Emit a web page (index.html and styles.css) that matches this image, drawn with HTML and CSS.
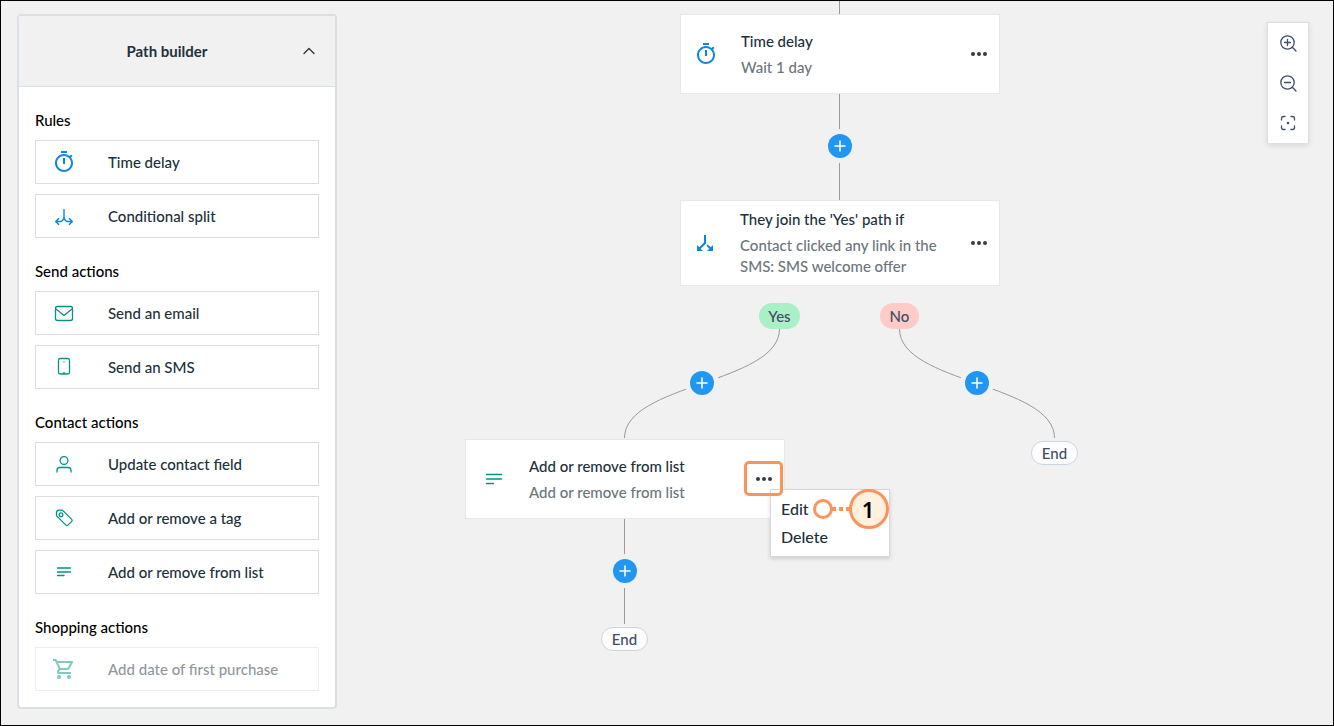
FILE: index.html
```html
<!DOCTYPE html>
<html lang="en">
<head>
<meta charset="utf-8">
<meta name="viewport" content="width=device-width, initial-scale=1">
<title>Path builder</title>
<link rel="stylesheet" href="styles.css">
</head>
<body>
<svg class="sprite" aria-hidden="true">
  <symbol id="timer" viewBox="0 0 24 24"><path fill="currentColor" d="M15 1H9v2h6V1zm-4 13h2V8h-2v6zm8.03-6.61 1.42-1.42c-.43-.51-.9-.99-1.41-1.41l-1.42 1.42C16.07 4.74 14.12 4 12 4c-4.97 0-9 4.03-9 9s4.02 9 9 9 9-4.03 9-9c0-2.12-.74-4.07-1.97-5.61zM12 20c-3.87 0-7-3.13-7-7s3.13-7 7-7 7 3.13 7 7-3.13 7-7 7z"/></symbol>
  <symbol id="lines" viewBox="0 0 24 24"><path stroke="currentColor" stroke-width="1.3" stroke-linecap="round" d="M5.500 8h13M5.500 12h13M5.500 15.500h6.500"/></symbol>
  <symbol id="dots" viewBox="0 0 18 6"><g fill="#3a3a3d"><circle cx="3" cy="3" r="2"/><circle cx="9" cy="3" r="2"/><circle cx="15" cy="3" r="2"/></g></symbol>
  <symbol id="plus" viewBox="0 0 24 24"><path stroke="#fff" stroke-width="1.500" stroke-linecap="round" d="M12 7v10M7 12h10"/></symbol>
</svg>
<div class="frame">
  <aside class="builder">
    <button class="builder-head" type="button" aria-expanded="true">
      <span>Path builder</span>
      <svg class="chevron" viewBox="0 0 20 20" fill="none" stroke="#2b3440" stroke-width="1.300" stroke-linecap="round" stroke-linejoin="round"><path d="M5 12.500 10 7.500l5 5"/></svg>
    </button>
    <div class="builder-body">
      <section class="group">
        <h2>Rules</h2>
        <button class="step" type="button"><svg class="icon blue"><use href="#timer"/></svg>Time delay</button>
        <button class="step" type="button"><svg class="icon blue" viewBox="0 0 24 24" fill="none" stroke="currentColor" stroke-width="1.400" stroke-linecap="round" stroke-linejoin="round"><path d="M12 5.500V12c0 2.500-1 4.700-3 5.500H4M12 12c0 2.500 1 4.700 3 5.500h5M6.700 14.500l-3 3 3 3M17.300 14.500l3 3-3 3"/></svg>Conditional split</button>
      </section>
      <section class="group">
        <h2>Send actions</h2>
        <button class="step" type="button"><svg class="icon teal" viewBox="0 0 24 24" fill="none" stroke="currentColor" stroke-width="1.300" stroke-linejoin="round"><rect x="3.500" y="5.500" width="17" height="14" rx="2"/><path d="m4 8 8 6.500L20 8"/></svg>Send an email</button>
        <button class="step" type="button"><svg class="icon teal" viewBox="0 0 24 24" fill="none" stroke="currentColor" stroke-width="1.300"><rect x="6.500" y="3.500" width="11" height="15.500" rx="1.800"/><path d="M10.800 18h2.400"/><circle cx="12" cy="7" r=".3" stroke-width=".8"/></svg>Send an SMS</button>
      </section>
      <section class="group">
        <h2>Contact actions</h2>
        <button class="step" type="button"><svg class="icon teal" viewBox="0 0 24 24" fill="none" stroke="currentColor" stroke-width="1.300" stroke-linecap="round"><circle cx="12" cy="8.500" r="3.900"/><path d="M5 20v-1.500q0-3 3-3h8q3 0 3 3V20"/></svg>Update contact field</button>
        <button class="step" type="button"><svg class="icon teal" viewBox="0 0 24 24" fill="none" stroke="currentColor" stroke-width="1.300" stroke-linejoin="round"><path d="M4.500 9.500V7q0-2.500 2.500-2.800h2.700q.8 0 1.500.7l8.500 8.500q1 1 0 2l-3.700 3.700q-1 1-2 0l-8.700-8.500q-.8-.6-.8-1.100z"/><circle cx="9" cy="8.700" r="1.900"/></svg>Add or remove a tag</button>
        <button class="step" type="button"><svg class="icon teal"><use href="#lines"/></svg>Add or remove from list</button>
      </section>
      <section class="group">
        <h2>Shopping actions</h2>
        <button class="step" type="button" disabled><svg class="icon teal" viewBox="0 0 24 24"><path fill="currentColor" d="M15.550 13c.75 0 1.410-.41 1.750-1.030l3.580-6.490A.996.996 0 0 0 20.010 4H5.210l-.94-2H1v2h2l3.600 7.590-1.350 2.440C4.520 15.370 5.480 17 7 17h12v-2H7l1.100-2h7.450zM6.160 6h12.150l-2.760 5H8.530L6.160 6zM7 18c-1.100 0-1.990.9-1.990 2S5.900 22 7 22s2-.9 2-2-.9-2-2-2zm10 0c-1.100 0-1.990.9-1.990 2s.89 2 1.990 2 2-.9 2-2-.9-2-2-2z"/></svg>Add date of first purchase</button>
      </section>
    </div>
  </aside>

  <main class="canvas">
    <svg class="wires" fill="none" stroke="#999" stroke-width="1">
      <path d="M838.500 0V13M838.500 93V199M623.500 518V623"/>
      <path d="M778.500 328C778.500 382.500 623.500 382.500 623.500 437"/>
      <path d="M898.500 328C898.500 382.500 1053.500 382.500 1053.500 437"/>
    </svg>

    <article class="node node-delay">
      <svg class="icon blue"><use href="#timer"/></svg>
      <div><h3>Time delay</h3><p>Wait 1 day</p></div>
      <button class="more" type="button" aria-label="More options"><svg><use href="#dots"/></svg></button>
    </article>
    <button class="add add-main" type="button" aria-label="Add step"><svg><use href="#plus"/></svg></button>

    <article class="node node-split">
      <svg class="icon blue" viewBox="0 0 24 24"><path fill="currentColor" transform="matrix(1 0 0 -1 0 24)" d="m14 4 2.290 2.290-2.880 2.880 1.420 1.420 2.880-2.880L20 10V4h-6zm-4 0H4v6l2.290-2.290 4.710 4.700V20h2v-8.410l-5.290-5.300L10 4z"/></svg>
      <div><h3>They join the 'Yes' path if</h3><p>Contact clicked any link in the SMS: SMS welcome offer</p></div>
      <button class="more" type="button" aria-label="More options"><svg><use href="#dots"/></svg></button>
    </article>
    <span class="pill yes">Yes</span>
    <span class="pill no">No</span>
    <button class="add add-yes" type="button" aria-label="Add step to Yes path"><svg><use href="#plus"/></svg></button>
    <button class="add add-no" type="button" aria-label="Add step to No path"><svg><use href="#plus"/></svg></button>
    <span class="pill end end-no">End</span>

    <article class="node node-list">
      <svg class="icon teal" viewBox="0 0 24 24"><path stroke="currentColor" stroke-width="1.500" stroke-linecap="round" d="M4.500 7.500h15M4.500 12h15M4.500 16.500h7"/></svg>
      <div><h3>Add or remove from list</h3><p>Add or remove from list</p></div>
      <button class="more" type="button" aria-label="More options"><svg><use href="#dots"/></svg></button>
    </article>
    <button class="add add-list" type="button" aria-label="Add step"><svg><use href="#plus"/></svg></button>
    <span class="pill end end-list">End</span>

    <div class="menu">
      <button type="button">Edit</button>
      <button type="button">Delete</button>
    </div>
    <div class="highlight"></div>
    <div class="callout">
      <svg viewBox="0 0 78 40" fill="none" stroke="#fc935b">
        <path stroke-width="4" stroke-dasharray="4 3" d="M20 20h19"/>
        <circle cx="11" cy="20" r="8.500" stroke-width="3" fill="#fff"/>
        <circle cx="57" cy="20" r="18.500" stroke-width="3" fill="#fff1de"/>
      </svg>
      <span>1</span>
    </div>

    <div class="zoom">
      <button type="button" aria-label="Zoom in"><svg viewBox="0 0 18 18"><circle cx="8.500" cy="8.500" r="6.700"/><path d="m13.300 13.300 3.700 3.700M8.500 5.500v6M5.500 8.500h6"/></svg></button>
      <button type="button" aria-label="Zoom out"><svg viewBox="0 0 18 18"><circle cx="8.500" cy="8.500" r="6.700"/><path d="m13.300 13.300 3.700 3.700M5.500 8.500h6"/></svg></button>
      <button type="button" aria-label="Fit to screen"><svg viewBox="0 0 18 18"><path d="M2.500 6V4.500q0-2 2-2H6M12 2.500h1.500q2 0 2 2V6M15.500 12v1.500q0 2-2 2H12M6 15.500H4.500q-2 0-2-2V12"/><circle cx="9" cy="9" r=".6"/></svg></button>
    </div>
  </main>
</div>
</body>
</html>
```

FILE: styles.css
```css
* { box-sizing: border-box; }
body {
  margin: 0;
  font: 500 15px/21px Lato, "Open Sans", sans-serif;
  color: #21303a;
}
h2, h3, p { margin: 0; font: inherit; }
button {
  margin: 0;
  padding: 0;
  border: 0;
  background: none;
  font: inherit;
  color: inherit;
  cursor: pointer;
}
svg { display: block; }
.sprite { position: absolute; width: 0; height: 0; }

.frame {
  display: grid;
  grid-template-columns: 1fr;
  min-height: 100vh;
  border: 1px solid #000;
  background: #f1f1f1;
}
.builder, .canvas { grid-area: 1 / 1; }

/* Side panel */
.builder {
  z-index: 1;
  justify-self: start;
  align-self: start;
  width: 320px;
  margin: 13px 16px;
  border: 2px solid #dadfe6;
  border-radius: 4px;
  background: #fff;
}
.builder-head {
  display: grid;
  grid-template-columns: 1fr 20px;
  align-items: center;
  width: 100%;
  height: 71px;
  padding: 0 16px;
  border-bottom: 1px solid #dadfe6;
  background: #f1f1f1;
  font-weight: 700;
}
.chevron { width: 20px; height: 20px; }
.builder-body {
  display: grid;
  gap: 23px;
  padding: 23px 16px 16px;
}
.group { display: grid; gap: 10px; }
.group h2 { line-height: 20px; color: #000; }
.step {
  display: grid;
  grid-template-columns: 56px 1fr;
  column-gap: 16px;
  align-items: center;
  height: 44px;
  border: 1px solid #dcdddf;
  text-align: left;
}
.step:disabled { opacity: 0.5; cursor: default; }
.icon { width: 24px; height: 24px; justify-self: center; }
.blue { color: #0a85e8; }
.teal { color: #0a9185; }

/* Flow canvas */
.canvas { position: relative; overflow: hidden; }
.wires { position: absolute; top: 0; left: 0; width: 100%; height: 100%; }
.node {
  position: absolute;
  display: grid;
  grid-template-columns: 60px 1fr 40px;
  align-items: center;
  width: 320px;
  min-height: 80px;
  padding: 8px 0;
  border: 1px solid #e8e8e8;
  background: #fff;
}
.node .icon { margin-right: 10px; }
.node p { margin-top: 5px; color: #6c757b; }
.node-delay { left: 679px; top: 13px; }
.node-split { left: 679px; top: 199px; grid-template-columns: 59px 1fr 40px; }
.node-list { left: 464px; top: 438px; grid-template-columns: 63px 1fr 40px; }
.node-split .icon { margin-right: 12px; }
.node-list .icon { margin-right: 8px; }
.node-split div { padding-right: 16px; }
.more { display: grid; place-items: center; height: 32px; }
.more svg { width: 18px; height: 6px; }

.add {
  position: absolute;
  width: 24px;
  height: 24px;
  border-radius: 50%;
  background: #2196f3;
  box-shadow: 0 0 0 5px #f1f1f1;
}
.add svg { width: 24px; height: 24px; }
.add-main { left: 827px; top: 133px; }
.add-yes { left: 689px; top: 370px; }
.add-no { left: 964px; top: 370px; }
.add-list { left: 612px; top: 558px; }

.pill {
  position: absolute;
  min-width: 39px;
  padding: 0 8px;
  border-radius: 13px;
  line-height: 26px;
  text-align: center;
  color: #3f4d66;
}
.yes { left: 758px; top: 302px; min-width: 41px; background: #a9f0c6; }
.no { left: 879px; top: 302px; background: #fecbc8; }
.end {
  min-width: 47px;
  border: 1px solid #ccd3e2;
  background: #fdfdfd;
  line-height: 22px;
}
.end-no { left: 1030px; top: 440px; }
.end-list { left: 600px; top: 626px; }

.menu {
  position: absolute;
  left: 769px;
  top: 488px;
  display: grid;
  width: 120px;
  padding: 4px 10px 6px;
  border: 1px solid #d8d8d8;
  background: #fff;
  box-shadow: 0 2px 4px rgba(0, 0, 0, 0.14);
  font-size: 16px;
}
.menu button { height: 28px; text-align: left; }
.highlight {
  position: absolute;
  left: 743px;
  top: 460px;
  width: 39px;
  height: 35px;
  border: 3px solid #fc935b;
  border-radius: 5px;
  pointer-events: none;
}
.callout {
  position: absolute;
  left: 811px;
  top: 488px;
  display: grid;
  grid-template-columns: 36px 40px;
  width: 78px;
  height: 40px;
  pointer-events: none;
}
.callout svg { grid-area: 1 / 1 / 2 / 3; width: 78px; height: 40px; }
.callout span {
  grid-area: 1 / 2;
  font: 600 22px/40px "Noto Sans", "Open Sans", sans-serif;
  text-align: center;
  color: #000;
}

.zoom {
  position: absolute;
  top: 21px;
  right: 24px;
  width: 42px;
  border: 1px solid #dedede;
  background: #fff;
  box-shadow: 0 2px 6px rgba(0, 0, 0, 0.1);
}
.zoom button { display: grid; place-items: center; width: 100%; height: 40px; }
.zoom svg {
  width: 18px;
  height: 18px;
  fill: none;
  stroke: #3f4d66;
  stroke-width: 1.3;
  stroke-linecap: round;
}
```
